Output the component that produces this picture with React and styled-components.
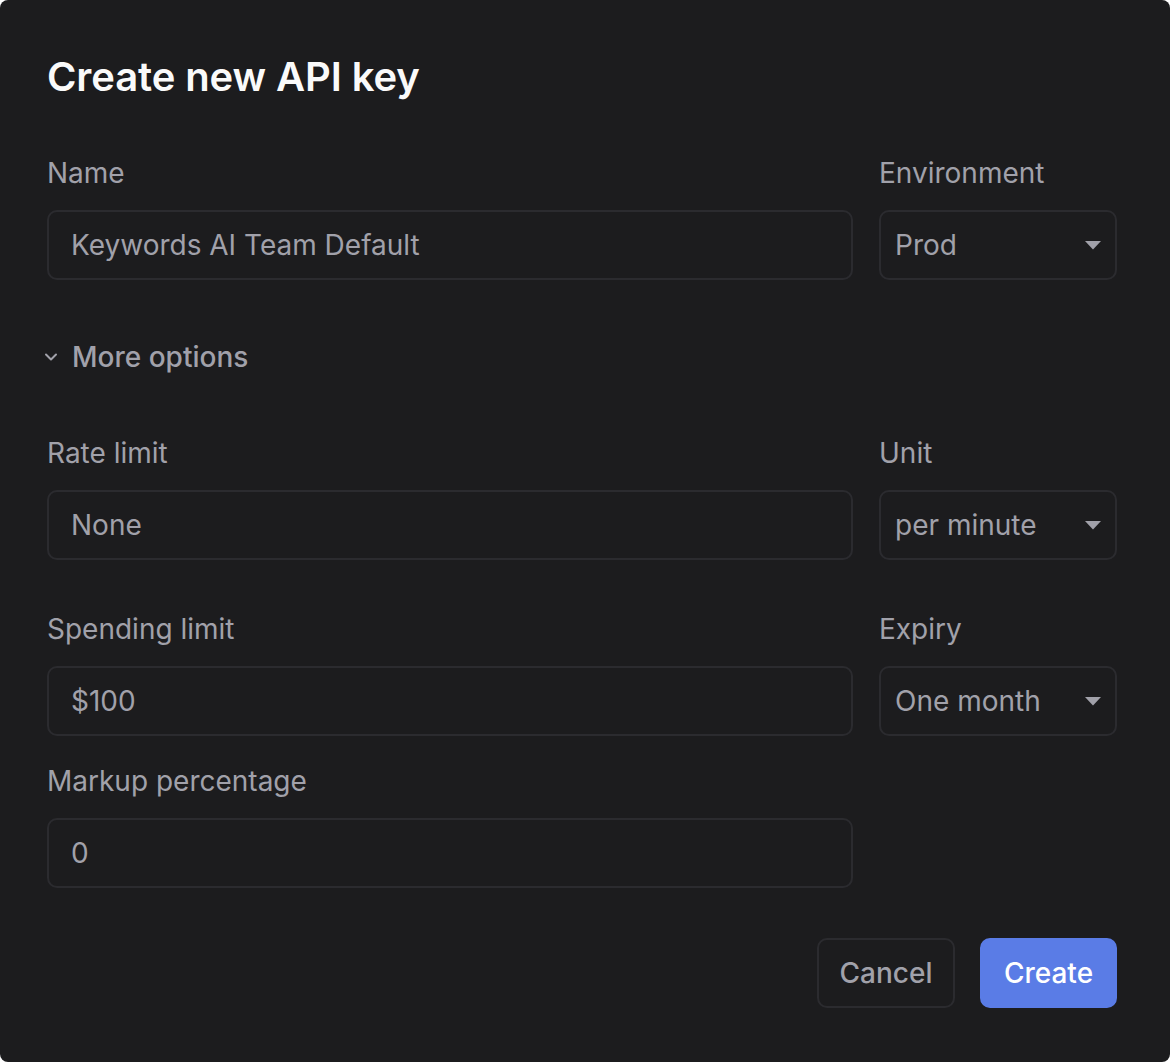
import styled, { createGlobalStyle } from "styled-components";

const GlobalStyle = createGlobalStyle`
  html, body {
    margin: 0;
    padding: 0;
    background: #ffffff;
  }
  * {
    box-sizing: border-box;
  }
`;

const Dialog = styled.div`
  width: 1170px;
  height: 1062px;
  background: #1c1c1e;
  border-radius: 8px;
  padding: 53px 53px 0 47px;
  font-family: Inter, "Noto Sans", sans-serif;
  color: #a1a1aa;
`;

const Title = styled.h2`
  margin: 0;
  font-size: 40px;
  line-height: 48px;
  font-weight: 600;
  color: #fafafa;
  letter-spacing: -0.1px;
`;

const Row = styled.div`
  display: grid;
  grid-template-columns: 1fr 238px;
  column-gap: 26px;
  margin-top: ${(p) => p.$top}px;
`;

const Field = styled.div`
  display: flex;
  flex-direction: column;
`;

const Label = styled.label`
  font-size: 28px;
  line-height: 42px;
  color: #a1a1aa;
  margin-bottom: 16px;
`;

const TextInput = styled.input`
  height: 70px;
  width: 100%;
  background: transparent;
  border: 2px solid #2b2b2f;
  border-radius: 10px;
  padding: 0 22px;
  font-family: inherit;
  font-size: 28px;
  color: #a1a1aa;
  outline: none;
`;

const SelectBox = styled.div`
  height: 70px;
  border: 2px solid #2b2b2f;
  border-radius: 10px;
  padding: 0 14px;
  display: flex;
  align-items: center;
  justify-content: space-between;
  font-size: 28px;
  color: #a1a1aa;
`;

const Toggle = styled.button`
  margin-top: 56px;
  display: flex;
  align-items: center;
  gap: 14px;
  background: none;
  border: none;
  padding: 0;
  margin-left: -3px;
  font-family: inherit;
  font-size: 28px;
  line-height: 42px;
  font-weight: 500;
  color: #a1a1aa;
  cursor: pointer;
`;

const Footer = styled.div`
  display: flex;
  justify-content: flex-end;
  gap: 25px;
  margin-top: 50px;
`;

const Button = styled.button`
  height: 70px;
  width: ${(p) => p.$w}px;
  border-radius: 10px;
  font-family: inherit;
  font-size: 28px;
  font-weight: 500;
  cursor: pointer;
  border: 2px solid ${(p) => (p.$primary ? "#5a7ce6" : "#2b2b2f")};
  background: ${(p) => (p.$primary ? "#5a7ce6" : "transparent")};
  color: ${(p) => (p.$primary ? "#ffffff" : "#a1a1aa")};
`;

function Caret() {
  return (
    <svg width="16" height="9" viewBox="0 0 16 9">
      <polygon points="0,0 16,0 8,8.5" fill="#a1a1aa" />
    </svg>
  );
}

function Chevron() {
  return (
    <svg width="14" height="10" viewBox="0 0 14 10">
      <polyline
        points="2,2.5 7,7.5 12,2.5"
        fill="none"
        stroke="#a1a1aa"
        strokeWidth="2"
        strokeLinecap="round"
        strokeLinejoin="round"
      />
    </svg>
  );
}

function Select({ label, value }) {
  return (
    <Field>
      <Label>{label}</Label>
      <SelectBox>
        <span>{value}</span>
        <Caret />
      </SelectBox>
    </Field>
  );
}

function Input({ label, value }) {
  return (
    <Field>
      <Label>{label}</Label>
      <TextInput defaultValue={value} />
    </Field>
  );
}

export default function App() {
  return (
    <>
      <GlobalStyle />
      <Dialog>
        <Title>Create new API key</Title>
        <Row $top={51}>
          <Input label="Name" value="Keywords AI Team Default" />
          <Select label="Environment" value="Prod" />
        </Row>
        <Toggle>
          <Chevron />
          More options
        </Toggle>
        <Row $top={54}>
          <Input label="Rate limit" value="None" />
          <Select label="Unit" value="per minute" />
        </Row>
        <Row $top={48}>
          <Input label="Spending limit" value="$100" />
          <Select label="Expiry" value="One month" />
        </Row>
        <Row $top={24}>
          <Input label="Markup percentage" value="0" />
        </Row>
        <Footer>
          <Button $w={138}>Cancel</Button>
          <Button $w={137} $primary>
            Create
          </Button>
        </Footer>
      </Dialog>
    </>
  );
}
